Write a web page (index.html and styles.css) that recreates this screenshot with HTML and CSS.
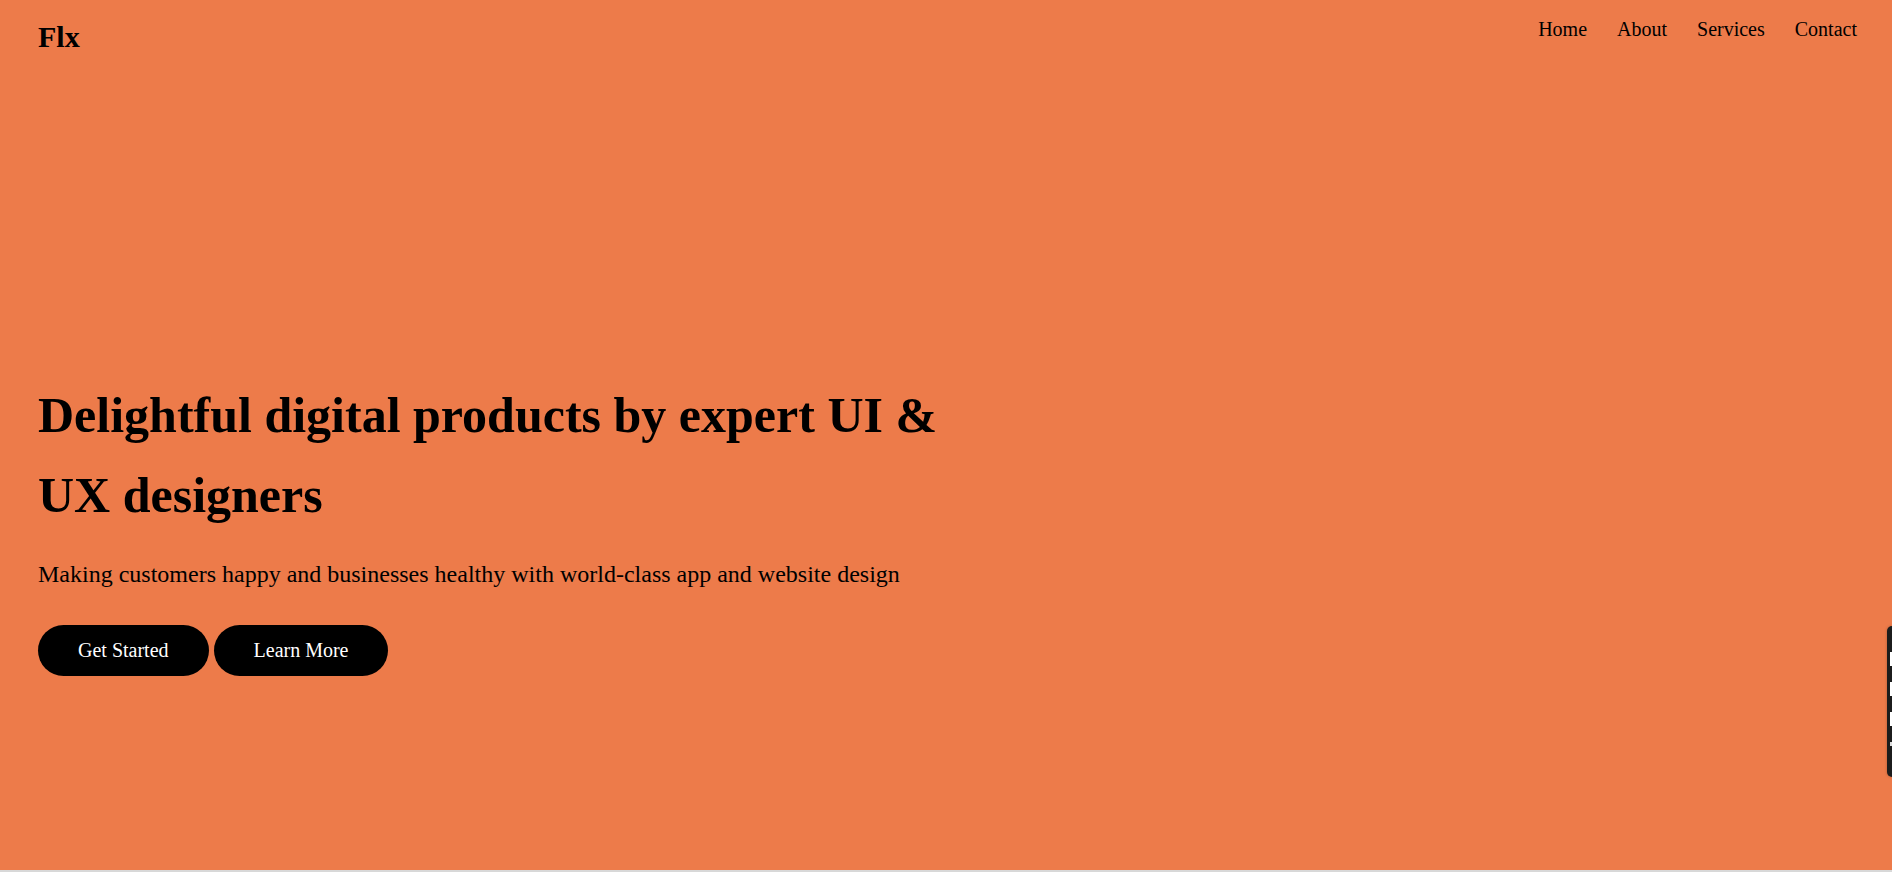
FILE: index.html
```html
<!DOCTYPE html>
<html lang="en">
<head>
<meta charset="utf-8">
<title>Flx</title>
<link rel="stylesheet" href="styles.css">
</head>
<body>
<section class="hero">
  <header class="header">
    <div class="logo">Flx</div>
    <nav class="nav">
      <a href="#" class="nav-link">Home</a>
      <a href="#" class="nav-link">About</a>
      <a href="#" class="nav-link">Services</a>
      <a href="#" class="nav-link">Contact</a>
    </nav>
  </header>
  <div class="hero-content">
    <h1 class="headline">Delightful digital products by expert UI &amp; UX designers</h1>
    <p class="subtitle">Making customers happy and businesses healthy with world-class app and website design</p>
    <div class="actions">
      <a href="#" class="btn">Get Started</a>
      <a href="#" class="btn">Learn More</a>
    </div>
  </div>
</section>
<div class="next-section"></div>
<div class="side-tab">
  <span class="side-tab-item"></span>
  <span class="side-tab-item"></span>
  <span class="side-tab-item"></span>
  <span class="side-tab-dot"></span>
</div>
</body>
</html>
```

FILE: styles.css
```css
* { box-sizing: border-box; }
html, body { margin: 0; padding: 0; }
body {
  font-family: "Liberation Serif", "Times New Roman", serif;
  color: #000;
  background: #dcdcdc;
  overflow: hidden;
}
.hero {
  background: #ed7b4a;
  height: 870px;
  display: flex;
  flex-direction: column;
}
.header {
  display: flex;
  justify-content: space-between;
  align-items: flex-start;
  padding: 18px 35px 0 38px;
}
.logo {
  font-size: 30px;
  font-weight: bold;
  line-height: 33px;
  margin-top: 2px;
}
.nav {
  display: flex;
  gap: 30px;
}
.nav-link {
  font-size: 20px;
  line-height: 23px;
  color: #000;
  text-decoration: none;
}
.hero-content {
  padding: 322px 38px 0 38px;
}
.headline {
  margin: 0;
  font-size: 50px;
  line-height: 80px;
  font-weight: bold;
  max-width: 960px;
}
.subtitle {
  margin: 26px 0 0 0;
  font-size: 24px;
  line-height: 27px;
}
.actions {
  display: flex;
  gap: 5px;
  margin-top: 37px;
}
.btn {
  display: inline-block;
  background: #000;
  color: #fff;
  text-decoration: none;
  font-size: 20px;
  line-height: 23px;
  padding: 14px 40px;
  border-radius: 26px;
}
.next-section {
  height: 2px;
  background: #d8d8d8;
}
.side-tab {
  position: fixed;
  right: 0;
  top: 626px;
  width: 5px;
  height: 151px;
  background: #1c1c1c;
  border-radius: 6px 0 0 6px;
  box-shadow: 0 0 3px rgba(0,0,0,0.25);
  display: flex;
  flex-direction: column;
  align-items: flex-end;
  padding-top: 26px;
  gap: 16px;
}
.side-tab-item {
  width: 2px;
  height: 14px;
  background: #fff;
}
.side-tab-dot {
  width: 2px;
  height: 4px;
  background: #ddd;
}
```
